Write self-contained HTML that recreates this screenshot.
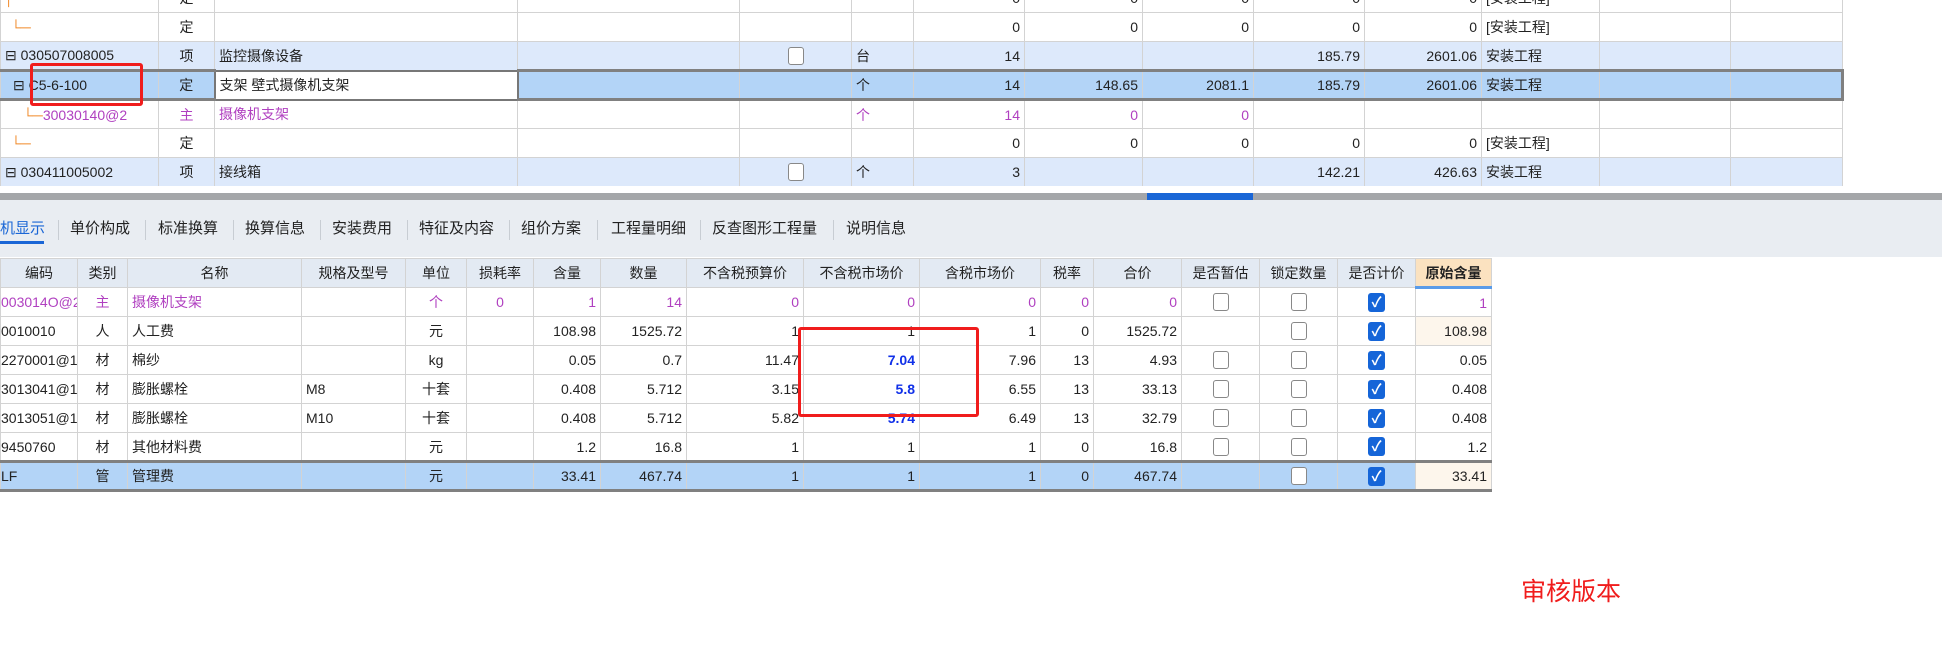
<!DOCTYPE html>
<html><head><meta charset="utf-8">
<style>
*{margin:0;padding:0;box-sizing:border-box}
body{width:1942px;height:646px;overflow:hidden;background:#fff;position:relative;font-family:"Liberation Sans","Noto Sans CJK SC",sans-serif;font-size:14px;color:#222}
table{border-collapse:collapse;table-layout:fixed;position:absolute;left:0}
td{border:1px solid #d3d3d3;height:29px;padding:0 4px;white-space:nowrap;overflow:hidden;font-size:14px}
.r{text-align:right}.c{text-align:center}
.p{color:#b040c0}
.x{background:#dde9fb}
.s td{background:#b3d4f7;border-top:3px solid #808080;border-bottom:3px solid #808080}
.cb{display:inline-block;width:16px;height:18px;border:1px solid #888;border-radius:3px;background:#fff;vertical-align:middle}
.ck{display:inline-block;width:17px;height:19px;border-radius:3px;background:#1565d8;color:#fff;font-size:14px;line-height:19px;text-align:center;vertical-align:middle;font-weight:bold}
.tree{color:#f08a2a}
.hd td{background:#e3eaf3;text-align:center;height:29px}
.tabs{position:absolute;left:0;top:200px;width:1942px;height:57px;background:#e9edf2}
.tabs span{position:absolute;top:17px;font-size:15px;color:#222}
.tabs i{position:absolute;top:20px;width:1px;height:20px;background:#c8cdd3}
.red{position:absolute;border:3px solid #f01c1c;border-radius:3px}
.bl{color:#1030e8;font-weight:bold}
</style></head><body>

<table style="top:-17px;width:1842px">
<colgroup><col style="width:158px"><col style="width:56px"><col style="width:303px"><col style="width:222px"><col style="width:112px"><col style="width:62px"><col style="width:111px"><col style="width:118px"><col style="width:111px"><col style="width:111px"><col style="width:117px"><col style="width:118px"><col style="width:131px"><col style="width:112px"></colgroup>
<tr><td><span class="tree">│</span></td><td class="c">定</td><td></td><td></td><td></td><td></td><td class="r">0</td><td class="r">0</td><td class="r">0</td><td class="r">0</td><td class="r">0</td><td>[安装工程]</td><td></td><td></td></tr>
<tr><td><span class="tree" style="padding-left:6px">└─</span></td><td class="c">定</td><td></td><td></td><td></td><td></td><td class="r">0</td><td class="r">0</td><td class="r">0</td><td class="r">0</td><td class="r">0</td><td>[安装工程]</td><td></td><td></td></tr>
<tr class="x"><td class="x">⊟ 030507008005</td><td class="c x">项</td><td class="x">监控摄像设备</td><td class="x"></td><td class="c x"><span class="cb"></span></td><td class="x">台</td><td class="r x">14</td><td class="x"></td><td class="x"></td><td class="r x">185.79</td><td class="r x">2601.06</td><td class="x">安装工程</td><td class="x"></td><td class="x"></td></tr>
<tr class="s"><td style="padding-left:12px">⊟ C5-6-100</td><td class="c">定</td><td style="background:#fff;border:2px solid #777">支架 壁式摄像机支架</td><td></td><td></td><td>个</td><td class="r">14</td><td class="r">148.65</td><td class="r">2081.1</td><td class="r">185.79</td><td class="r">2601.06</td><td>安装工程</td><td></td><td style="border-right:3px solid #808080"></td></tr>
<tr><td class="p" style="padding-left:22px"><span class="tree">└─</span>30030140@2</td><td class="c p">主</td><td class="p">摄像机支架</td><td></td><td></td><td class="p">个</td><td class="r p">14</td><td class="r p">0</td><td class="r p">0</td><td></td><td></td><td></td><td></td><td></td></tr>
<tr><td><span class="tree" style="padding-left:6px">└─</span></td><td class="c">定</td><td></td><td></td><td></td><td></td><td class="r">0</td><td class="r">0</td><td class="r">0</td><td class="r">0</td><td class="r">0</td><td>[安装工程]</td><td></td><td></td></tr>
<tr><td class="x">⊟ 030411005002</td><td class="c x">项</td><td class="x">接线箱</td><td class="x"></td><td class="c x"><span class="cb"></span></td><td class="x">个</td><td class="r x">3</td><td class="x"></td><td class="x"></td><td class="r x">142.21</td><td class="r x">426.63</td><td class="x">安装工程</td><td class="x"></td><td class="x"></td></tr>
<tr><td style="color:#aaa">⊟</td><td></td><td></td><td></td><td></td><td></td><td></td><td></td><td></td><td></td><td></td><td></td><td></td><td></td></tr>
</table>
<div style="position:absolute;left:0;top:186px;width:1942px;height:14px;background:#fff"></div>
<div style="position:absolute;left:0;top:193px;width:1942px;height:7px;background:#a4a6a9"></div>
<div style="position:absolute;left:1147px;top:193px;width:106px;height:7px;background:#1a66d6"></div>

<div class="red" style="left:30px;top:63px;width:113px;height:43px"></div>

<div class="tabs">
<span style="left:0;color:#1a66d6">机显示</span><div style="position:absolute;left:0;top:41px;width:44px;height:3px;background:#1a66d6"></div>
<i style="left:58px"></i><span style="left:70px">单价构成</span>
<i style="left:145px"></i><span style="left:158px">标准换算</span>
<i style="left:233px"></i><span style="left:245px">换算信息</span>
<i style="left:320px"></i><span style="left:332px">安装费用</span>
<i style="left:407px"></i><span style="left:419px">特征及内容</span>
<i style="left:509px"></i><span style="left:521px">组价方案</span>
<i style="left:597px"></i><span style="left:611px">工程量明细</span>
<i style="left:700px"></i><span style="left:712px">反查图形工程量</span>
<i style="left:833px"></i><span style="left:846px">说明信息</span>
</div>

<table style="top:258px;width:1491px">
<colgroup><col style="width:77px"><col style="width:50px"><col style="width:174px"><col style="width:104px"><col style="width:61px"><col style="width:67px"><col style="width:67px"><col style="width:86px"><col style="width:117px"><col style="width:116px"><col style="width:121px"><col style="width:53px"><col style="width:88px"><col style="width:78px"><col style="width:78px"><col style="width:78px"><col style="width:76px"></colgroup>
<tr class="hd"><td>编码</td><td>类别</td><td>名称</td><td>规格及型号</td><td>单位</td><td>损耗率</td><td>含量</td><td>数量</td><td>不含税预算价</td><td>不含税市场价</td><td>含税市场价</td><td>税率</td><td>合价</td><td>是否暂估</td><td>锁定数量</td><td>是否计价</td><td style="background:#fbe2c0;font-weight:bold;border-bottom:3px solid #5a9be8">原始含量</td></tr>
<tr class="p"><td style="padding-left:0">003014O@2</td><td class="c">主</td><td>摄像机支架</td><td></td><td class="c">个</td><td class="c">0</td><td class="r">1</td><td class="r">14</td><td class="r">0</td><td class="r">0</td><td class="r">0</td><td class="r">0</td><td class="r">0</td><td class="c"><span class="cb"></span></td><td class="c"><span class="cb"></span></td><td class="c"><span class="ck">✓</span></td><td class="r">1</td></tr>
<tr><td style="padding-left:0">0010010</td><td class="c">人</td><td>人工费</td><td></td><td class="c">元</td><td></td><td class="r">108.98</td><td class="r">1525.72</td><td class="r">1</td><td class="r">1</td><td class="r">1</td><td class="r">0</td><td class="r">1525.72</td><td></td><td class="c"><span class="cb"></span></td><td class="c"><span class="ck">✓</span></td><td class="r" style="background:#fdf6ec">108.98</td></tr>
<tr><td style="padding-left:0">2270001@1</td><td class="c">材</td><td>棉纱</td><td></td><td class="c">kg</td><td></td><td class="r">0.05</td><td class="r">0.7</td><td class="r">11.47</td><td class="r bl">7.04</td><td class="r">7.96</td><td class="r">13</td><td class="r">4.93</td><td class="c"><span class="cb"></span></td><td class="c"><span class="cb"></span></td><td class="c"><span class="ck">✓</span></td><td class="r">0.05</td></tr>
<tr><td style="padding-left:0">3013041@1</td><td class="c">材</td><td>膨胀螺栓</td><td>M8</td><td class="c">十套</td><td></td><td class="r">0.408</td><td class="r">5.712</td><td class="r">3.15</td><td class="r bl">5.8</td><td class="r">6.55</td><td class="r">13</td><td class="r">33.13</td><td class="c"><span class="cb"></span></td><td class="c"><span class="cb"></span></td><td class="c"><span class="ck">✓</span></td><td class="r">0.408</td></tr>
<tr><td style="padding-left:0">3013051@1</td><td class="c">材</td><td>膨胀螺栓</td><td>M10</td><td class="c">十套</td><td></td><td class="r">0.408</td><td class="r">5.712</td><td class="r">5.82</td><td class="r bl">5.74</td><td class="r">6.49</td><td class="r">13</td><td class="r">32.79</td><td class="c"><span class="cb"></span></td><td class="c"><span class="cb"></span></td><td class="c"><span class="ck">✓</span></td><td class="r">0.408</td></tr>
<tr><td style="padding-left:0">9450760</td><td class="c">材</td><td>其他材料费</td><td></td><td class="c">元</td><td></td><td class="r">1.2</td><td class="r">16.8</td><td class="r">1</td><td class="r">1</td><td class="r">1</td><td class="r">0</td><td class="r">16.8</td><td class="c"><span class="cb"></span></td><td class="c"><span class="cb"></span></td><td class="c"><span class="ck">✓</span></td><td class="r">1.2</td></tr>
<tr class="s"><td style="padding-left:0">LF</td><td class="c">管</td><td>管理费</td><td></td><td class="c">元</td><td></td><td class="r">33.41</td><td class="r">467.74</td><td class="r">1</td><td class="r">1</td><td class="r">1</td><td class="r">0</td><td class="r">467.74</td><td></td><td class="c"><span class="cb"></span></td><td class="c"><span class="ck">✓</span></td><td class="r" style="background:#fdf6ec">33.41</td></tr>
</table>

<div class="red" style="left:798px;top:327px;width:181px;height:90px"></div>

<div style="position:absolute;left:1521px;top:572px;font-size:25px;color:#f01c1c">审核版本</div>
</body></html>
